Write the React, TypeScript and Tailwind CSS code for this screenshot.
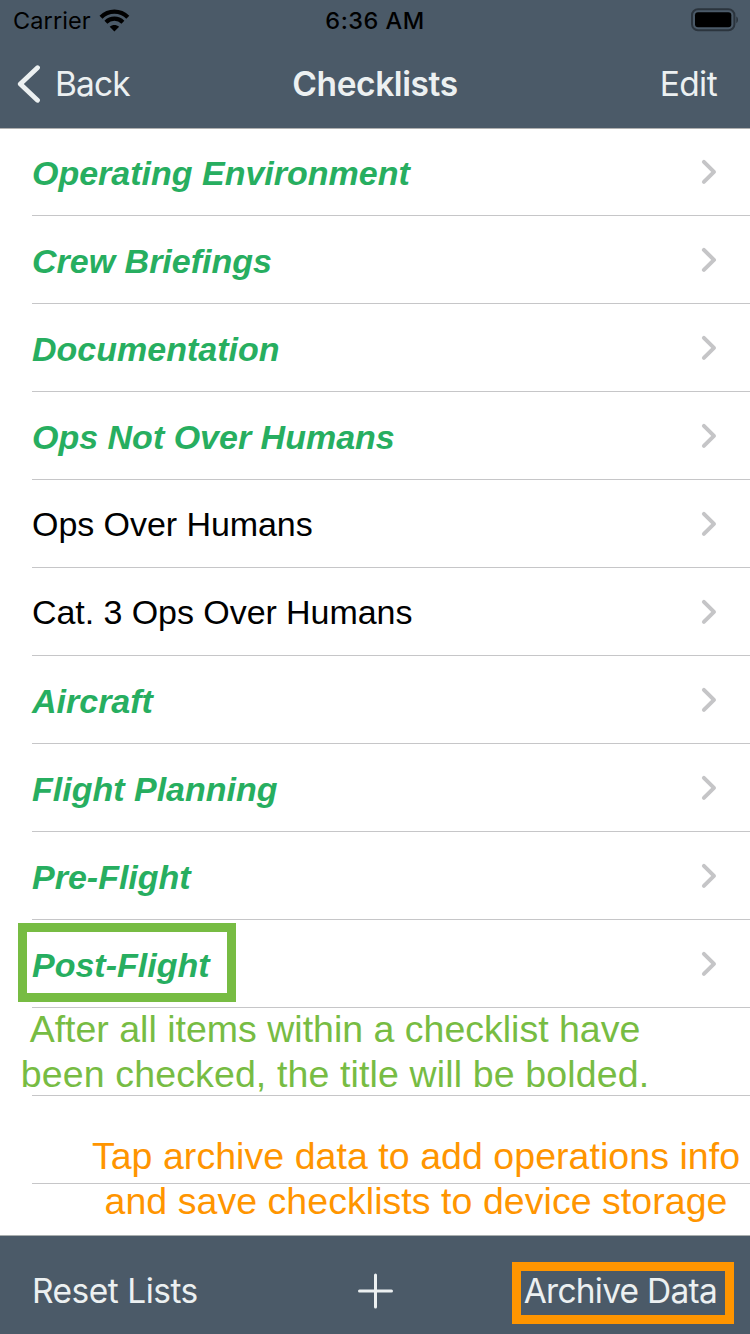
import React from "react";

type Item = { title: string; done?: boolean };

const items: Item[] = [
  { title: "Operating Environment", done: true },
  { title: "Crew Briefings", done: true },
  { title: "Documentation", done: true },
  { title: "Ops Not Over Humans", done: true },
  { title: "Ops Over Humans" },
  { title: "Cat. 3 Ops Over Humans" },
  { title: "Aircraft", done: true },
  { title: "Flight Planning", done: true },
  { title: "Pre-Flight", done: true },
  { title: "Post-Flight", done: true },
];

function StatusBar() {
  return (
    <div className="grid h-10 grid-cols-3 items-center text-black">
      <div className="flex items-center pl-[13px]">
        <span className="h-10 w-[77px] pt-px text-[23.5px] leading-10 tracking-[0.1px] whitespace-nowrap">Carrier</span>
        <svg className="-mt-px ml-[9px]" width="31" height="24" viewBox="0 0 31 24" fill="none" stroke="currentColor" strokeWidth="4.2">
          <path d="M2 9.3C9.5 1.7 21.3 1.7 28.8 9.3" />
          <path d="M6.9 14.2C11.7 9.5 19.1 9.5 23.9 14.2" />
          <path d="M10.7 18.8C13.5 16.4 17.3 16.4 20.1 18.8L15.4 23.5Z" fill="currentColor" stroke="none" />
        </svg>
      </div>
      <div className="h-10 pt-px text-center text-[23.5px] leading-10 font-medium tracking-[0.5px]">6:36 AM</div>
      <div className="flex justify-end pr-[11px]">
        <svg width="49" height="24" viewBox="0 0 49 24">
          <rect x="2" y="1.3" width="42.4" height="21" rx="6" fill="none" stroke="#2b343d" strokeWidth="2" />
          <rect x="5" y="4.3" width="36.3" height="15" rx="3" fill="#000" />
          <path d="M46.3 8.5C48.6 9.6 48.6 14 46.3 15.2Z" fill="#2b343d" />
        </svg>
      </div>
    </div>
  );
}

function NavBar() {
  return (
    <div className="grid h-[88px] grid-cols-3 items-center text-[#ecf0f1]">
      <div className="flex items-center pl-[17px]">
        <svg width="24" height="40" viewBox="0 0 24 40" fill="none" stroke="currentColor" strokeWidth="4.8" strokeLinecap="round" strokeLinejoin="round">
          <path d="M20.5 3.7L3.3 20L20.5 36.3" />
        </svg>
        <span className="ml-[14px] text-[33.5px] leading-[44px] tracking-[-0.9px]">Back</span>
      </div>
      <div className="text-center text-[33.5px] leading-[44px] font-semibold tracking-[-0.4px]">Checklists</div>
      <div className="pr-[33px] text-right text-[33.5px] leading-[44px] tracking-[-0.6px]">Edit</div>
    </div>
  );
}

function Row({ item }: { item?: Item }) {
  return (
    <li className="ml-8 flex h-[88px] shrink-0 items-center justify-between border-b border-[#c6c6c8] pr-[33px]">
      {item && (
        <>
          <span
            className={
              item.done
                ? "mt-[3px] text-[34px] leading-[44px] font-bold whitespace-nowrap text-[#27ae60] italic"
                : "mt-[1px] text-[34px] leading-[44px] tracking-[-0.06px] whitespace-nowrap text-black"
            }
          >
            {item.title}
          </span>
          <svg className="mt-px" width="16" height="26" viewBox="0 0 16 26" fill="none" stroke="#c5c5c7" strokeWidth="4" strokeLinecap="round" strokeLinejoin="round">
            <path d="M2.9 2.9L13 12.9L2.9 22.9" />
          </svg>
        </>
      )}
    </li>
  );
}

export default function App() {
  return (
    <div className="relative flex h-[1334px] w-[750px] flex-col overflow-hidden bg-white font-['Inter',sans-serif]">
      <header className="h-32 shrink-0 bg-[#4b5a68]">
        <StatusBar />
        <NavBar />
      </header>

      <ul className="flex flex-1 flex-col overflow-hidden font-['Liberation_Sans',sans-serif] shadow-[inset_0_1px_0_#b0b0b0,inset_0_-1px_0_#a9aeae]">
        {items.map((item) => (
          <Row key={item.title} item={item} />
        ))}
        <Row />
        <Row />
      </ul>

      <footer className="grid h-[98px] shrink-0 grid-cols-3 items-center bg-[#4b5a68] pt-3 text-[33.5px] leading-[44px] text-[#ecf0f1]">
        <span className="pl-8 tracking-[-0.5px] whitespace-nowrap">Reset Lists</span>
        <svg className="mx-auto" width="36" height="36" viewBox="0 0 36 36" stroke="currentColor" strokeWidth="3" strokeLinecap="round">
          <path d="M18.5 2V34M2.5 18H34.5" />
        </svg>
        <span className="pr-[33px] text-right tracking-[-0.75px] whitespace-nowrap">Archive Data</span>
      </footer>

      <div className="absolute top-[923px] left-[17.5px] h-[79px] w-[218px] border-[9px] border-[#77bc43]" />
      <p className="absolute top-[1007px] left-0 w-[670px] text-center font-['Liberation_Sans',sans-serif] text-[37.5px] leading-[45px] whitespace-nowrap text-[#77bc43]">
        After all items within a checklist have
        <br />
        <span className="tracking-[0.13px]">been checked, the title will be bolded.</span>
      </p>
      <p className="absolute top-[1134px] left-[82px] w-[668px] text-center font-['Liberation_Sans',sans-serif] text-[37.5px] leading-[45px] tracking-[0.05px] whitespace-nowrap text-[#ff9500]">
        Tap archive data to add operations info
        <br />
        and save checklists to device storage
      </p>
      <div className="absolute top-[1262px] left-[512px] h-[62px] w-[222px] border-[9px] border-[#ff9500]" />
    </div>
  );
}
